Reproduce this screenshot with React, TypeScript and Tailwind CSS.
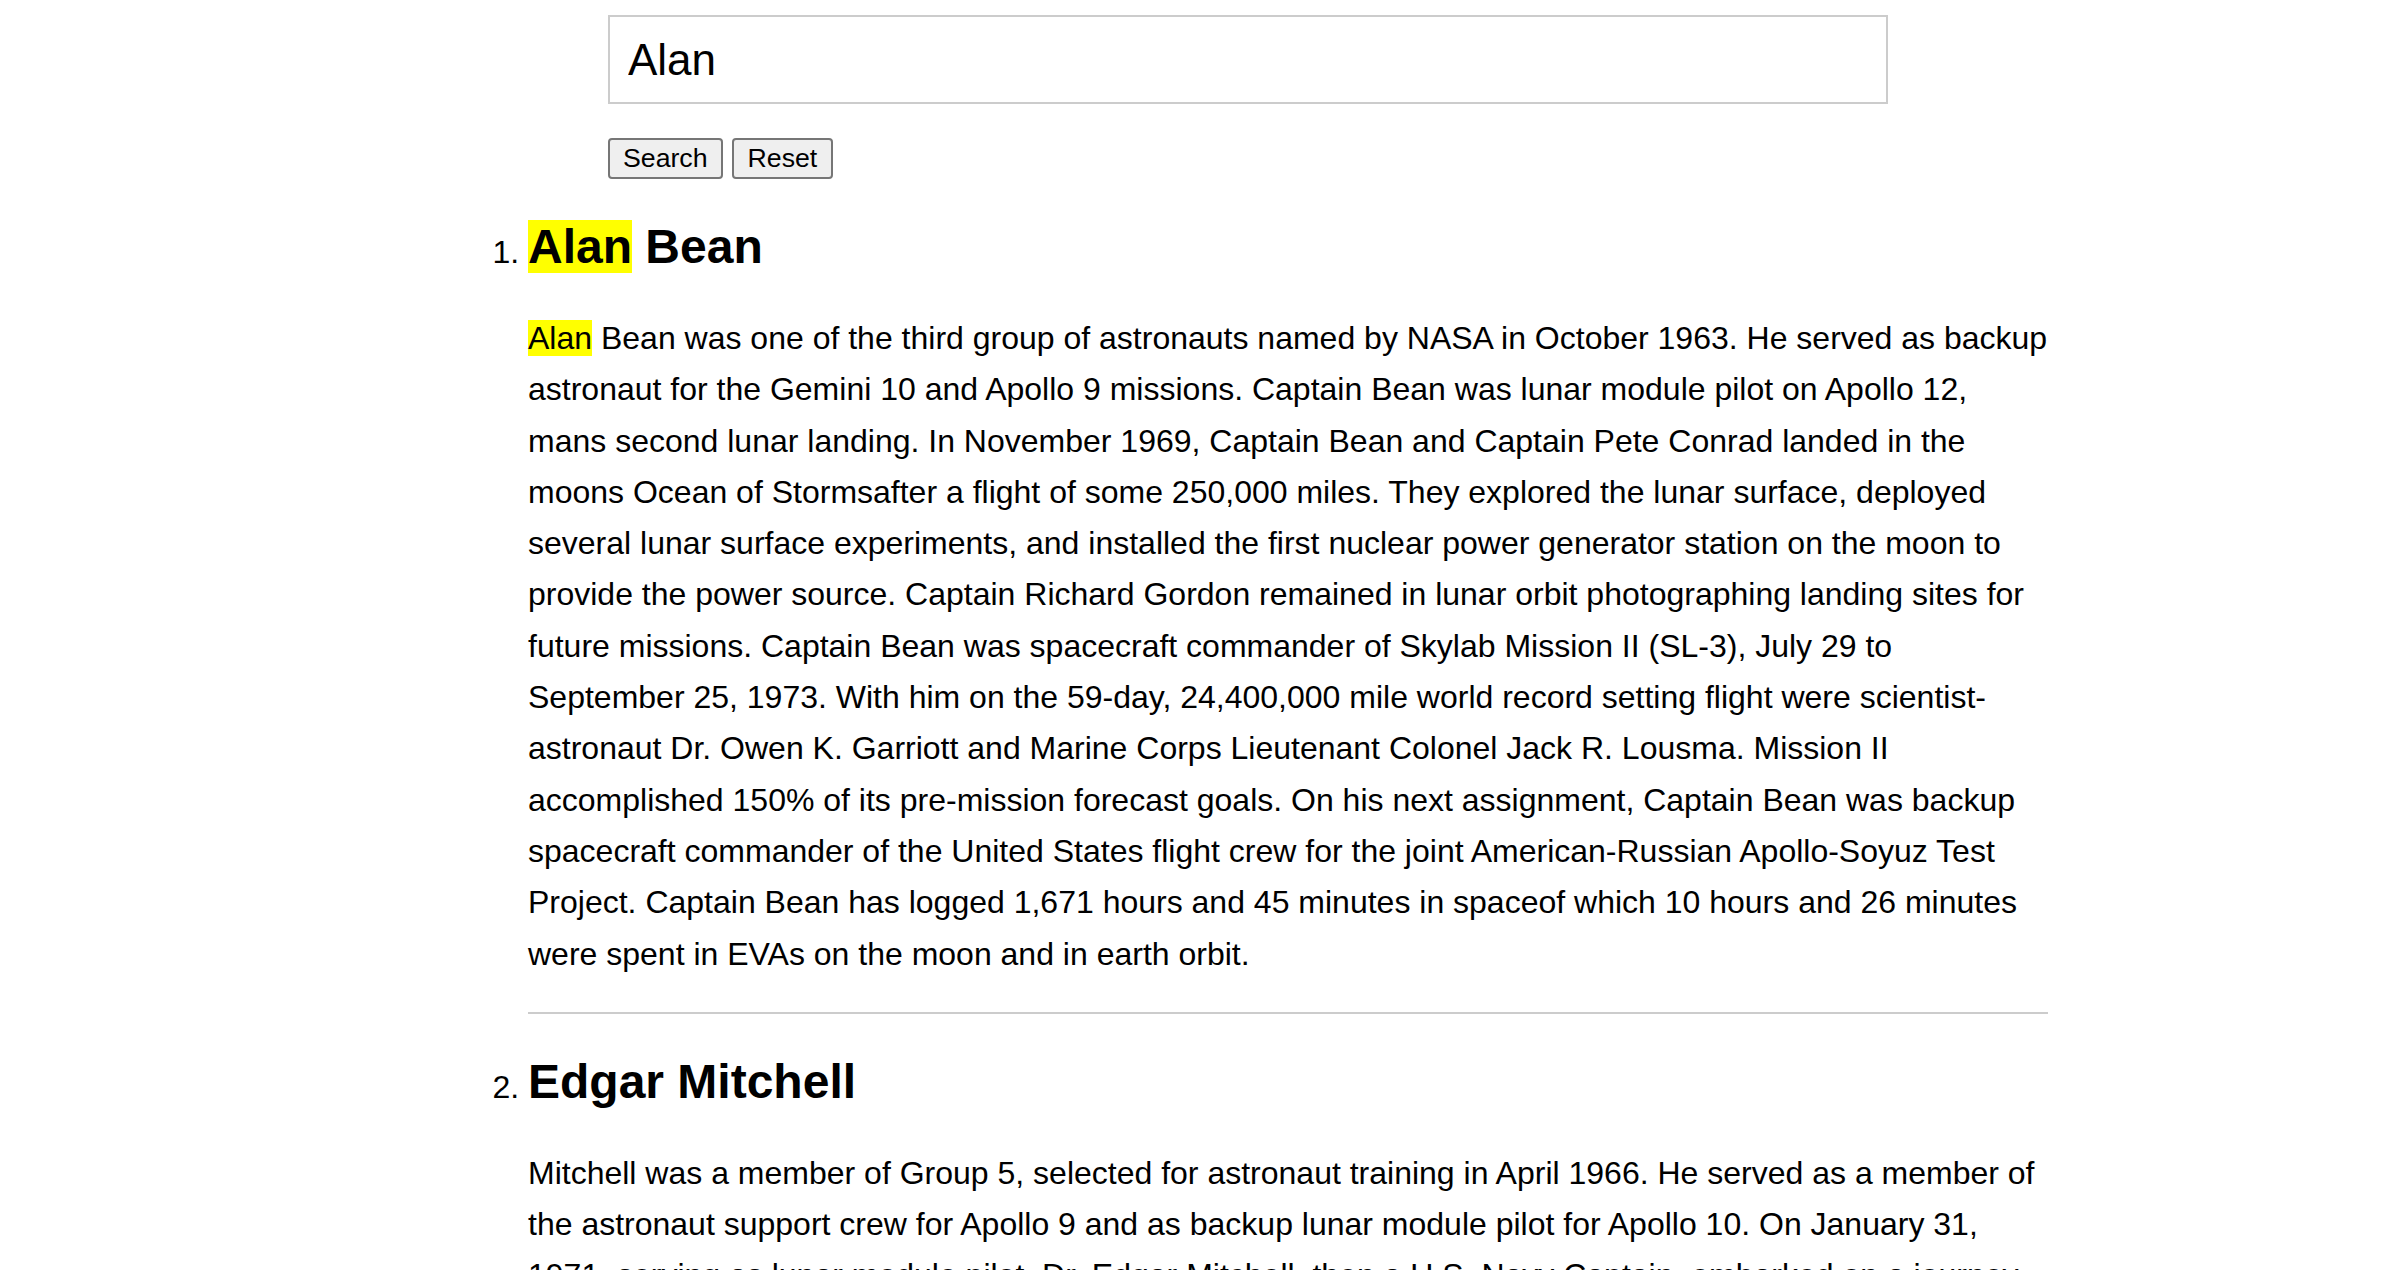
import { useState } from "react";

const astronauts = [
  {
    name: "Alan Bean",
    bio: "Alan Bean was one of the third group of astronauts named by NASA in October 1963. He served as backup astronaut for the Gemini 10 and Apollo 9 missions. Captain Bean was lunar module pilot on Apollo 12, mans second lunar landing. In November 1969, Captain Bean and Captain Pete Conrad landed in the moons Ocean of Stormsafter a flight of some 250,000 miles. They explored the lunar surface, deployed several lunar surface experiments, and installed the first nuclear power generator station on the moon to provide the power source. Captain Richard Gordon remained in lunar orbit photographing landing sites for future missions. Captain Bean was spacecraft commander of Skylab Mission II (SL-3), July 29 to September 25, 1973. With him on the 59-day, 24,400,000 mile world record setting flight were scientist-astronaut Dr. Owen K. Garriott and Marine Corps Lieutenant Colonel Jack R. Lousma. Mission II accomplished 150% of its pre-mission forecast goals. On his next assignment, Captain Bean was backup spacecraft commander of the United States flight crew for the joint American-Russian Apollo-Soyuz Test Project. Captain Bean has logged 1,671 hours and 45 minutes in spaceof which 10 hours and 26 minutes were spent in EVAs on the moon and in earth orbit.",
  },
  {
    name: "Edgar Mitchell",
    bio: "Mitchell was a member of Group 5, selected for astronaut training in April 1966. He served as a member of the astronaut support crew for Apollo 9 and as backup lunar module pilot for Apollo 10. On January 31, 1971, serving as lunar module pilot, Dr. Edgar Mitchell, then a U.S. Navy Captain, embarked on a journey through outer space of some 500,000 miles that resulted in becoming the sixth man to walk on the moon.",
  },
];

// wrap every match of the query in a <mark>
const highlight = (text: string, query: string) => {
  if (!query) return text;
  const parts = text.split(new RegExp(`(${query})`, "g"));
  return parts.map((part, i) =>
    part === query ? (
      <mark key={i} className="bg-[#ffff00] text-black">
        {part}
      </mark>
    ) : (
      part
    )
  );
};

export default function App() {
  const [query, setQuery] = useState("Alan");

  return (
    <div className="min-h-screen bg-white text-black font-['Liberation_Sans',Arial,Helvetica,sans-serif]">
      {/* Search form */}
      <div className="ml-[608px] pt-[15px]">
        <input
          type="text"
          value={query}
          onChange={(e) => setQuery(e.target.value)}
          className="block w-[1280px] h-[89px] border-2 border-[#cccccc] px-[18px] text-[44px] text-black outline-none"
        />
        <div className="flex gap-[9px] mt-[34px]">
          <button className="h-[41px] px-[13px] bg-[#efefef] border-2 border-[#767676] rounded-[4px] text-[26.7px] leading-none">
            Search
          </button>
          <button className="h-[41px] px-[14px] bg-[#efefef] border-2 border-[#767676] rounded-[4px] text-[26.7px] leading-none">
            Reset
          </button>
        </div>
      </div>

      {/* Results */}
      <ol className="list-decimal list-outside ml-[528px] w-[1520px] mt-[5px] text-[32px]">
        {astronauts.map((a) => (
          <li key={a.name}>
            <h2 className="mt-[40px] mb-[39px] text-[48px] leading-[55px] font-bold">
              {highlight(a.name, query)}
            </h2>
            <p className="leading-[51.3px]">{highlight(a.bio, query)}</p>
            <hr className="mt-[32px] border-0 border-t-2 border-[#cccccc]" />
          </li>
        ))}
      </ol>
    </div>
  );
}
